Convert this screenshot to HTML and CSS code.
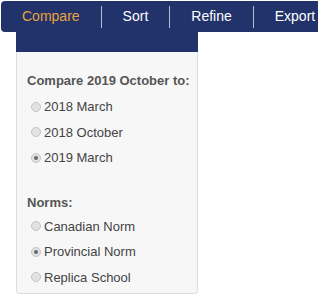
FILE: index.html
```html
<!DOCTYPE html>
<html>
<head>
<meta charset="utf-8">
<link rel="stylesheet" href="styles.css">
</head>
<body>
<nav class="nav">
  <a class="nav-item active">Compare</a>
  <span class="sep"></span>
  <a class="nav-item">Sort</a>
  <span class="sep"></span>
  <a class="nav-item">Refine</a>
  <span class="sep"></span>
  <a class="nav-item">Export</a>
</nav>
<div class="dropdown">
  <div class="dd-head"></div>
  <div class="dd-body">
    <div class="group-title">Compare 2019 October to:</div>
    <div class="row"><span class="radio"></span>2018 March</div>
    <div class="row"><span class="radio"></span>2018 October</div>
    <div class="row"><span class="radio checked"></span>2019 March</div>
    <div class="group-title second">Norms:</div>
    <div class="row"><span class="radio"></span>Canadian Norm</div>
    <div class="row"><span class="radio checked"></span>Provincial Norm</div>
    <div class="row"><span class="radio"></span>Replica School</div>
  </div>
</div>
</body>
</html>
```
FILE: styles.css
```css
html, body {
  margin: 0;
  padding: 0;
  background: #fff;
  font-family: "Liberation Sans", Arial, sans-serif;
  overflow: hidden;
}
body {
  width: 318px;
  height: 298px;
  padding-top: 1px;
  box-sizing: border-box;
}
.nav {
  margin-left: 1px;
  height: 31px;
  background: #22326b;
  border-radius: 4px 0 0 4px;
  display: flex;
  align-items: center;
  overflow: hidden;
}
.nav-item {
  color: #fff;
  font-size: 14px;
  padding: 0 21px;
  line-height: 31px;
  white-space: nowrap;
}
.nav-item.active {
  color: #e8a43c;
}
.sep {
  flex: none;
  width: 1px;
  height: 22px;
  background: #b9bccb;
}
.dropdown {
  margin-left: 16px;
  width: 182px;
}
.dd-head {
  height: 20px;
  background: #22326b;
}
.dd-body {
  background: #f7f7f7;
  border: 1px solid #dcdcdc;
  border-top: none;
  border-radius: 0 0 4px 4px;
  padding: 19px 0 2px 10px;
  height: 220px;
}
.group-title {
  font-size: 13px;
  font-weight: bold;
  color: #555;
  line-height: 20px;
  height: 20px;
  margin-bottom: 3px;
}
.group-title.second {
  margin-top: 22px;
  margin-bottom: 1px;
}
.row {
  display: flex;
  align-items: center;
  height: 25.5px;
  font-size: 13px;
  color: #444;
  padding-left: 4px;
}
.radio {
  flex: none;
  width: 10px;
  height: 10px;
  box-sizing: border-box;
  border-radius: 50%;
  border: 1px solid #c4c4c4;
  background: #e2e2e2;
  margin-right: 3px;
  position: relative;
}
.radio.checked::after {
  content: "";
  position: absolute;
  left: 2px;
  top: 2px;
  width: 4px;
  height: 4px;
  border-radius: 50%;
  background: #666;
}
```
